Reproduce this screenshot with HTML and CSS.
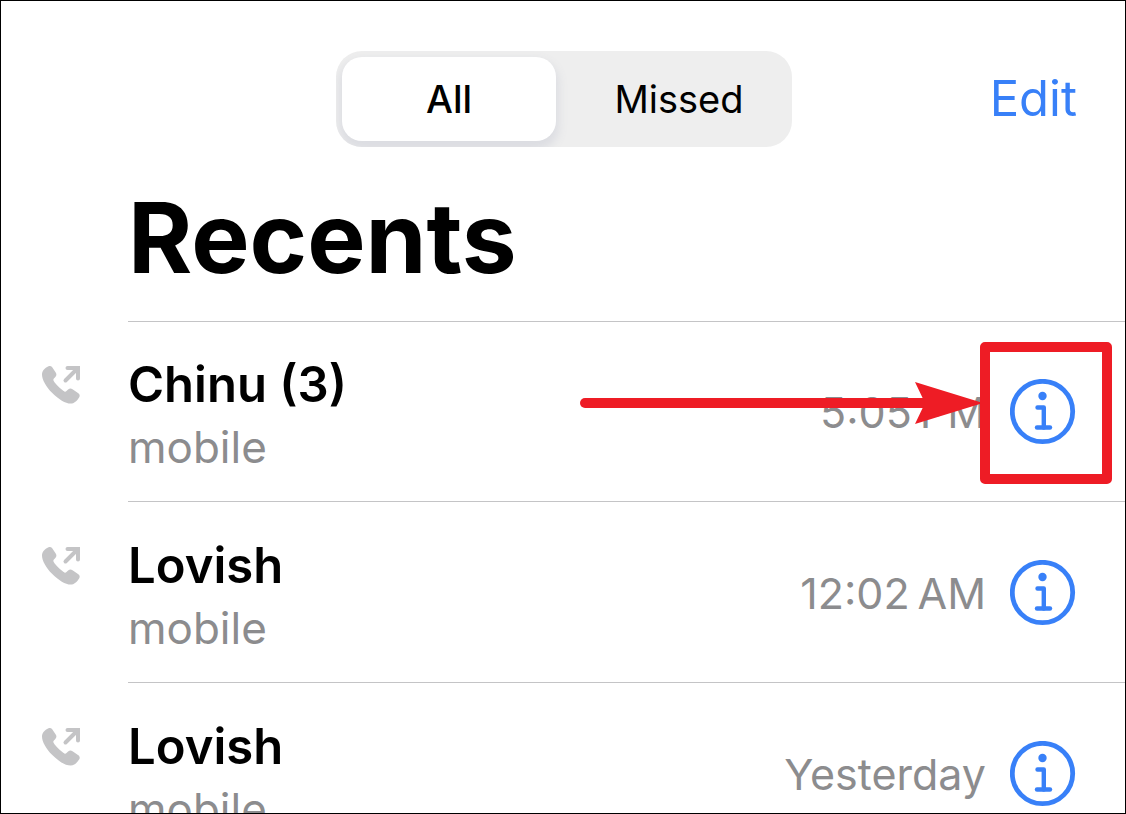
FILE: index.html
```html
<!DOCTYPE html>
<html lang="en">
<head>
<meta charset="utf-8">
<meta name="viewport" content="width=device-width, initial-scale=1">
<title>Recents</title>
<link rel="stylesheet" href="styles.css">
</head>
<body>
<svg class="sprite" aria-hidden="true">
  <symbol id="outgoing" viewBox="0 0 40 40">
    <path d="M7.500 1.200C9 .6 10.300 1 11.200 2.200L14.700 7.500C15.800 9.100 15.600 10.600 14.300 12L12.700 13.800C12.200 14.400 12.200 15 12.600 15.700C13.600 17.500 15.300 19.500 17.300 21.600C19.400 23.700 21.600 25.500 23.400 26.500C24.100 26.900 24.700 26.800 25.200 26.300L27.100 24.600C28.500 23.400 30 23.300 31.500 24.200L37 27.900C38.800 29.100 39.200 30.800 38.100 32.500C35.800 36 33.300 38.600 29.600 38.600C24.500 38.600 17.500 34.300 11.300 28C5 21.600 1 14.600 1 9.400C1 5.800 3.600 3.200 7.500 1.200Z" fill="currentColor"/>
    <path d="M24.500 15.500L36.500 3.500M26.500 3H37V13.500" fill="none" stroke="currentColor" stroke-width="4" stroke-linecap="round" stroke-linejoin="miter"/>
  </symbol>
  <symbol id="info" viewBox="0 0 66 66">
    <circle cx="32.500" cy="32.500" r="30.200" fill="none" stroke="currentColor" stroke-width="4.800"/>
    <circle cx="32.500" cy="17" r="4.200" fill="currentColor"/>
    <path d="M27.500 28.500H33.800V48.500" fill="none" stroke="currentColor" stroke-width="4.400" stroke-linecap="round" stroke-linejoin="round"/>
    <path d="M27 48.500H40" stroke="currentColor" stroke-width="4.400" stroke-linecap="round"/>
  </symbol>
</svg>
<main class="page">
  <header class="toolbar">
    <div class="segments" role="group" aria-label="Filter calls">
      <button class="segment segment-active" type="button" aria-pressed="true">All</button>
      <button class="segment" type="button" aria-pressed="false">Missed</button>
    </div>
    <button class="edit" type="button">Edit</button>
  </header>
  <h1 class="title">Recents</h1>
  <ul class="calls">
    <li class="call">
      <svg class="outgoing" role="img" aria-label="Outgoing call"><use href="#outgoing"/></svg>
      <div class="details">
        <div class="contact"><div class="name">Chinu (3)</div><div class="kind">mobile</div></div>
        <time class="time">5:05&#8201;PM</time>
        <button class="info" type="button" aria-label="Call details"><svg class="info-icon"><use href="#info"/></svg></button>
      </div>
      <svg class="arrow" viewBox="0 0 403 42" aria-hidden="true"><path d="M5 21H350" stroke="currentColor" stroke-width="10" stroke-linecap="round"/><path d="M335 0L403 21L335 42L345 21Z" fill="currentColor"/></svg>
      <div class="highlight"></div>
    </li>
    <li class="call">
      <svg class="outgoing" role="img" aria-label="Outgoing call"><use href="#outgoing"/></svg>
      <div class="details">
        <div class="contact"><div class="name">Lovish</div><div class="kind">mobile</div></div>
        <time class="time">12:02&#8201;AM</time>
        <button class="info" type="button" aria-label="Call details"><svg class="info-icon"><use href="#info"/></svg></button>
      </div>
    </li>
    <li class="call">
      <svg class="outgoing" role="img" aria-label="Outgoing call"><use href="#outgoing"/></svg>
      <div class="details">
        <div class="contact"><div class="name">Lovish</div><div class="kind">mobile</div></div>
        <time class="time">Yesterday</time>
        <button class="info" type="button" aria-label="Call details"><svg class="info-icon"><use href="#info"/></svg></button>
      </div>
    </li>
  </ul>
</main>
</body>
</html>
```
FILE: styles.css
```css
* {
  box-sizing: border-box;
}

body {
  margin: 0;
  background: #fff;
  color: #000;
  font-family: Inter, "Liberation Sans", sans-serif;
}

button {
  margin: 0;
  padding: 0;
  border: 0;
  background: none;
  color: inherit;
  font: inherit;
  cursor: pointer;
}

.sprite {
  position: absolute;
  width: 0;
  height: 0;
}

.page {
  height: 100vh;
  overflow: hidden;
  padding-top: 50px;
  border: 1px solid #000;
}

.toolbar {
  display: grid;
  grid-template-columns: 1fr 456px 1fr;
  align-items: center;
  padding: 0 48px 0 50px;
}

.segments {
  grid-column: 2;
  display: grid;
  grid-template-columns: 1fr 1fr;
  gap: 16px;
  padding: 6px;
  border-radius: 26px;
  background: #eee;
  overflow: hidden;
}

.segment {
  border-radius: 20px;
  font-size: 38px;
  line-height: 84px;
}

.segment-active {
  background: #fff;
  box-shadow: 0 6px 10px 3px #dcdde2;
  font-weight: 500;
}

.edit {
  justify-self: end;
  color: #3880f8;
  font-size: 49px;
  line-height: 60px;
}

.title {
  margin: 31px 0 0;
  padding: 0 24px 23px 127px;
  font-size: 98px;
  font-weight: 700;
  line-height: 120px;
}

.calls {
  margin: 0;
  padding: 0;
  list-style: none;
}

.call {
  position: relative;
  display: grid;
  grid-template-columns: 127px 1fr;
}

.outgoing {
  width: 40px;
  height: 40px;
  margin: 44px 0 0 40px;
  color: #c4c4c6;
}

.details {
  display: flex;
  align-items: center;
  gap: 24px;
  padding: 24px 49px 23px 0;
  border-bottom: 1px solid #c4c4c6;
}

.call:first-child .details {
  padding-top: 23px;
  border-top: 1px solid #c4c4c6;
}

.contact {
  flex: 1;
  padding-top: 9px;
}

.name {
  font-size: 49px;
  font-weight: 600;
  line-height: 62px;
}

.kind {
  color: #8c8c8e;
  font-size: 44px;
  line-height: 62px;
}

.time {
  color: #8c8c8e;
  font-size: 43px;
  line-height: 60px;
  white-space: nowrap;
}

.info {
  width: 66px;
  height: 66px;
  color: #3880f8;
}

.info-icon {
  display: block;
  width: 66px;
  height: 66px;
}

.arrow {
  position: absolute;
  top: 61px;
  right: 142px;
  width: 403px;
  height: 42px;
  color: #ee1c25;
}

.highlight {
  position: absolute;
  top: 21px;
  right: 13px;
  bottom: 18px;
  width: 132px;
  border: 10px solid #ee1c25;
  border-radius: 5px;
}
```
